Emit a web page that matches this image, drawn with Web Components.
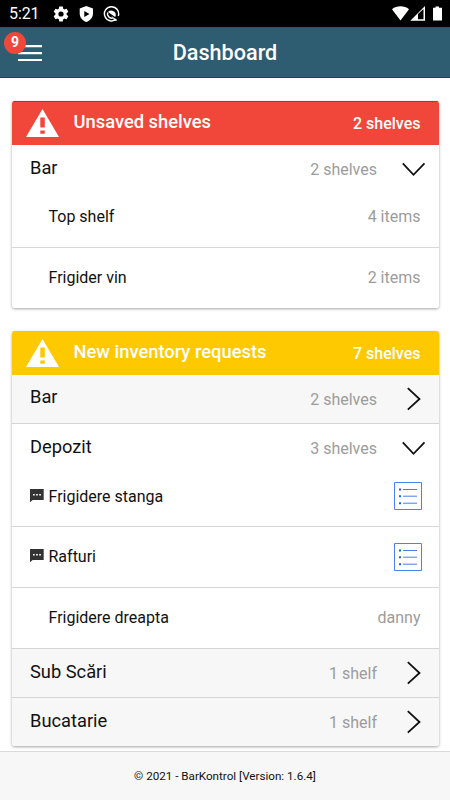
<!DOCTYPE html>
<html lang="en">
<head>
<meta charset="utf-8">
<title>Dashboard</title>
<style>
html, body { margin: 0; height: 100%; overflow: hidden; background: #fff; }
body { font-family: Roboto, "Noto Sans", sans-serif; color: #111; }
</style>
</head>
<body>
<bar-app>
  <status-bar slot="top">5:21</status-bar>
  <app-toolbar slot="top" count="9">Dashboard</app-toolbar>
  <shelf-card heading="Unsaved shelves" total="2 shelves" style="--tone:#f1473a;--edge:#e42012">
    <shelf-group name="Bar" note="2 shelves" open>
      <shelf-item note="4 items">Top shelf</shelf-item>
      <shelf-item note="2 items">Frigider vin</shelf-item>
    </shelf-group>
  </shelf-card>
  <shelf-card heading="New inventory requests" total="7 shelves" style="--tone:#ffc900;--edge:#ffc900">
    <shelf-group name="Bar" note="2 shelves"></shelf-group>
    <shelf-group name="Depozit" note="3 shelves" open>
      <shelf-item comment list>Frigidere stanga</shelf-item>
      <shelf-item comment list>Rafturi</shelf-item>
      <shelf-item note="danny">Frigidere dreapta</shelf-item>
    </shelf-group>
    <shelf-group name="Sub Scări" note="1 shelf"></shelf-group>
    <shelf-group name="Bucatarie" note="1 shelf"></shelf-group>
  </shelf-card>
  <app-footer slot="bottom">© 2021 - BarKontrol [Version: 1.6.4]</app-footer>
</bar-app>
<script>
class Base extends HTMLElement {
  connectedCallback() {
    if (!this.shadowRoot) this.attachShadow({ mode: 'open' }).innerHTML = this.view();
  }
  attr(n) { return this.getAttribute(n) || ''; }
}

customElements.define('bar-app', class extends Base {
  view() { return `<style>
    :host { display: flex; flex-direction: column; height: 800px; width: 450px; }
    main { flex: 1; min-height: 0; padding: 23px 11px 0 12px; display: flex; flex-direction: column; gap: 23px; }
  </style><slot name="top"></slot><main><slot></slot></main><slot name="bottom"></slot>`; }
});

customElements.define('status-bar', class extends Base {
  view() { return `<style>
    :host { display: flex; align-items: center; box-sizing: border-box; height: 27px; background: #000; color: #fff; padding: 1px 8.500px 0 9px; font-size: 16px; line-height: 26px; }
    .time { width: 44px; position: relative; top: .300px; letter-spacing: -.1px; }
    svg { display: block; fill: #fff; }
    .left { display: flex; gap: 9px; flex: 1; align-items: center; }
    .right { display: flex; align-items: center; }
  </style>
  <span class="time"><slot></slot></span>
  <div class="left">
    <svg width="16" height="16" viewBox="1.300 1.300 21.400 21.400"><path d="M19.43 12.98c.04-.32.07-.64.07-.98s-.03-.66-.07-.98l2.11-1.65c.19-.15.24-.42.12-.64l-2-3.46c-.12-.22-.39-.3-.61-.22l-2.49 1c-.52-.4-1.08-.73-1.69-.98l-.38-2.65C14.46 2.18 14.25 2 14 2h-4c-.25 0-.46.18-.49.42l-.38 2.65c-.61.25-1.17.59-1.69.98l-2.49-1c-.23-.09-.49 0-.61.22l-2 3.46c-.13.22-.07.49.12.64l2.11 1.65c-.04.32-.07.65-.07.98s.03.66.07.98l-2.11 1.65c-.19.15-.24.42-.12.64l2 3.46c.12.22.39.3.61.22l2.49-1c.52.4 1.08.73 1.69.98l.38 2.65c.03.24.24.42.49.42h4c.25 0 .46-.18.49-.42l.38-2.65c.61-.25 1.17-.59 1.69-.98l2.49 1c.23.09.49 0 .61-.22l2-3.46c.12-.22.07-.49-.12-.64zM12 15.500a3.500 3.500 0 1 1 0-7 3.500 3.500 0 0 1 0 7z"/></svg>
    <svg width="16" height="16" viewBox="0 0 16 16"><path fill-rule="evenodd" d="M8.300 0 15 2.600V7.600C15 11.600 12 14.900 8.300 16 4.600 14.900 1.700 11.600 1.700 7.600V2.600ZM6.300 4.900V10.900L11.500 7.900Z"/></svg>
    <svg width="17" height="16" viewBox="0 0 16 16"><g fill="none" stroke="#fff"><path stroke-width="1.400" d="M12.800 13.100A7.100 7.100 0 1 1 14.800 10"/><path stroke-width="1.500" d="M4.200 6.400A4.300 4.300 0 0 0 9.600 11.900"/></g><path d="M4.500 6A4.600 4.600 0 0 1 12.300 9.600L11.700 11Z"/><path d="M7.600 9.400 13.800 14.400 10.800 15 9.500 12Z"/></svg>
  </div>
  <div class="right">
    <svg width="50" height="16" viewBox="0 0 50 16"><path d="M0 3.200C4.700-.6 12.300-.6 17 3.200L8.500 14.500Z"/><path fill-rule="evenodd" d="M18.300 14.700 33 0V14.700ZM26 7.900V13.200H31.500V3.100Z"/><path d="M41 1.700H43.500V.4H47V1.700H50V14.500H41Z"/></svg>
  </div>`; }
});

customElements.define('app-toolbar', class extends Base {
  view() { return `<style>
    :host { display: grid; position: relative; height: 51px; box-sizing: border-box; background: #2e5c70; border-top: 1px solid #25566c; border-bottom: 1px solid #11495a; color: #fff; align-items: center; justify-items: center; font-size: 21.600px; font-weight: 500; }
    .menu { position: absolute; left: 18px; top: 17px; display: block; }
    .badge { position: absolute; left: 4px; top: 4px; width: 22px; height: 22px; border-radius: 50%; background: #f1473a; font-size: 14px; font-weight: 700; line-height: 21px; text-align: center; }
  </style>
  <svg class="menu" width="24" height="17"><path d="M0 1.200H24M0 8.200H24M0 15H24" stroke="#fff" stroke-width="2.200"/></svg>
  <span class="badge">${this.attr('count')}</span><span class="title"><slot></slot></span>`; }
});

customElements.define('shelf-card', class extends Base {
  view() { return `<style>
    :host { display: block; border-radius: 3px; overflow: hidden; background: #fff; box-shadow: 0 1px 3px rgba(0,0,0,.36); flex: none; }
    header { height: 43.500px; box-sizing: border-box; display: flex; align-items: center; background: var(--tone); border-top: 1px solid var(--edge); color: #fff; font-weight: 500; padding: 0 18.500px 0 14px; }
    svg { display: block; width: 33px; height: 28px; margin-right: 14.500px; }
    .h { flex: 1; font-size: 18.350px; position: relative; top: -1.500px; }
    .t { font-size: 16px; position: relative; top: .300px; }
  </style>
  <header><svg viewBox="0 0 33 28"><path fill="#fff" fill-rule="evenodd" d="M16.500 0 33 28H0ZM14.300 8.600V18.500H18.800V8.600ZM14.300 21.500V24.700H18.800V21.500Z"/></svg>
  <span class="h">${this.attr('heading')}</span><span class="t">${this.attr('total')}</span></header>
  <div class="body"><slot></slot></div>`; }
});

customElements.define('shelf-group', class extends Base {
  view() {
    const open = this.hasAttribute('open');
    return `<style>
    :host { display: block; background: #f7f7f7; border-bottom: 1px solid #d5d5d5; }
    :host([open]) { background: #fff; }
    :host(:last-child) { border-bottom: 0; }
    .row { display: flex; align-items: center; height: 48px; padding: 0 13px 0 18px; }
    :host([open]) .row { height: 42.500px; }
    .n { flex: 1; font-size: 18.300px; position: relative; top: -2px; }
    :host([open]) .n { top: 1.300px; }
    .note { font-size: 16px; color: #9c9c9c; margin-right: 24px; position: relative; top: .700px; }
    :host([open]) .note { top: 4px; }
    svg { display: block; width: 25px; height: 24px; position: relative; }
    :host([open]) svg { top: 3px; }
  </style>
  <div class="row"><span class="n">${this.attr('name')}</span><span class="note">${this.attr('note')}</span>
  <svg viewBox="0 0 25 24"><path fill="none" stroke="#111" stroke-width="1.800" d="${open ? 'M1.800 6.300 12.500 17.800 23.500 6.300' : 'M6.800 1.200 18.500 12 6.800 22.700'}"/></svg></div><slot></slot>`; }
});

customElements.define('shelf-item', class extends Base {
  view() {
    const comment = this.hasAttribute('comment') ? `<svg viewBox="0 0 14 13"><path fill="#333" d="M0 0H13.700V11H2.700L0 13.200Z"/><path fill="#fff" d="M3 5h1.700v1.500H3zM6.100 5h1.700v1.500H6.100zM9.200 5h1.700v1.500H9.200z"/></svg>` : '';
    const end = this.hasAttribute('list')
      ? `<svg class="list" viewBox="0 0 28 28"><path fill="none" stroke="#4a80f0" d="M.5 .5H27.500V27.500H.5Z"/><path fill="#1463ea" d="M5 6.500h2v2H5zM5 13.200h2v2H5zM5 20.200h2v2H5z"/><path stroke="#4a7cf0" d="M9 7.500H23M9 14.200H23M9 21.200H23"/></svg>`
      : `<span class="note">${this.attr('note')}</span>`;
    return `<style>
    :host { display: flex; align-items: center; height: 60.900px; box-sizing: border-box; border-bottom: 1px solid #d8d8d8; font-size: 16px; padding: 0 18.500px 0 18px; }
    :host(:last-child) { border-bottom: 0; height: 60.200px; }
    .mark { width: 18.500px; }
    .mark svg { display: block; width: 14px; height: 13px; position: relative; top: -1px; }
    .text { flex: 1; }
    .note { color: #9c9c9c; }
    .list { display: block; width: 28px; height: 28px; margin-right: -1.500px; }
  </style><span class="mark">${comment}</span><span class="text"><slot></slot></span>${end}`; }
});

customElements.define('app-footer', class extends Base {
  view() { return `<style>
    :host { display: flex; box-sizing: border-box; height: 49.500px; background: #f7f7f7; border-top: 1px solid #dadada; align-items: center; justify-content: center; font-size: 11.650px; padding-top: 1px; }
  </style><span><slot></slot></span>`; }
});
</script>
</body>
</html>
